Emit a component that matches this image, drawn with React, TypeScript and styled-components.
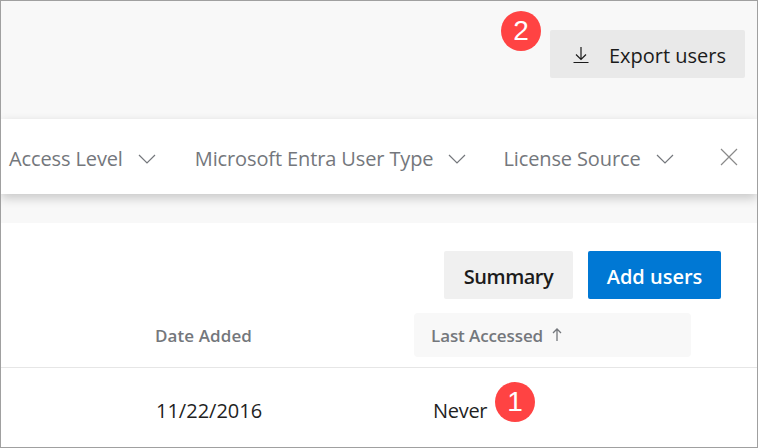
import * as React from 'react';
import styled, { createGlobalStyle } from 'styled-components';

const GlobalStyle = createGlobalStyle`
  html, body {
    margin: 0;
    padding: 0;
    background: #fff;
  }
  body {
    font-family: "Open Sans", "Noto Sans", sans-serif;
  }
`;

const Frame = styled.div`
  width: 758px;
  height: 448px;
  box-sizing: border-box;
  border: 1px solid #a0a0a0;
  position: relative;
  overflow: hidden;
  display: flex;
  flex-direction: column;
  background: #f8f8f8;
`;

const TopBar = styled.div`
  height: 118px;
  flex: none;
  display: flex;
  justify-content: flex-end;
  padding: 29px 12px 0 0;
  box-sizing: border-box;
`;

const Button = styled.div<{ $primary?: boolean; $width: number }>`
  width: ${p => p.$width}px;
  height: 48px;
  padding-top: 2px;
  display: flex;
  align-items: center;
  justify-content: center;
  box-sizing: border-box;
  border-radius: 2px;
  font-size: 20px;
  font-weight: 600;
  letter-spacing: ${p => (p.$primary ? '0' : '-0.5px')};
  color: ${p => (p.$primary ? '#fff' : '#1b1b1b')};
  background: ${p => (p.$primary ? '#0078d4' : '#f0f0f0')};
`;

const ExportButton = styled(Button)`
  background: #e9e9e9;
  gap: 19px;
  padding-left: 3px;
  font-weight: 500;
  letter-spacing: 0;
`;

const FilterBar = styled.div`
  height: 75px;
  flex: none;
  display: flex;
  align-items: center;
  padding: 4px 19px 0 8px;
  box-sizing: border-box;
  background: #fff;
  box-shadow: 0 4px 10px rgba(0, 0, 0, 0.2);
  position: relative;
`;

const Filter = styled.div<{ $gap: number }>`
  display: flex;
  align-items: center;
  gap: 15px;
  margin-right: ${p => p.$gap}px;
  font-size: 20px;
  letter-spacing: -0.12px;
  color: #74777c;
`;

const Chevron = () => (
  <svg width="18" height="10" viewBox="0 0 18 10" fill="none" stroke="#74777c" strokeWidth="1.2">
    <path d="M1 1l8 8 8-8" />
  </svg>
);

const CloseIcon = styled.svg`
  margin-left: auto;
  margin-bottom: 4px;
  width: 18px;
  height: 18px;
`;

const Spacer = styled.div`
  height: 29px;
  flex: none;
`;

const Panel = styled.div`
  flex: 1;
  background: #fff;
  display: flex;
  flex-direction: column;
`;

const Actions = styled.div`
  display: flex;
  justify-content: flex-end;
  gap: 15px;
  padding: 28px 36px 0 0;
`;

const HeaderRow = styled.div`
  display: flex;
  height: 69px;
  padding-top: 14px;
  box-sizing: border-box;
  border-bottom: 1px solid #e6e6e6;
`;

const Cell = styled.div`
  font-size: 17px;
`;

const DateHeader = styled(Cell)`
  width: 259px;
  padding: 11px 0 0 154px;
  box-sizing: content-box;
  font-weight: 600;
  letter-spacing: 0.1px;
  color: #74777c;
`;

const SortedHeader = styled(Cell)`
  width: 277px;
  height: 44px;
  box-sizing: border-box;
  padding-left: 17px;
  display: flex;
  align-items: center;
  gap: 9px;
  border-radius: 4px;
  background: #f8f8f8;
  font-weight: 600;
  letter-spacing: -0.1px;
  color: #74777c;
`;

const DataRow = styled.div`
  display: flex;
  padding-top: 29px;
  font-size: 20px;
  color: #1f1f1f;
`;

const DateCell = styled.div`
  width: 277px;
  padding-left: 155px;
`;

const NeverCell = styled.div`
  letter-spacing: -0.3px;
`;

const Badge = styled.div<{ $left: number; $top: number }>`
  position: absolute;
  left: ${p => p.$left}px;
  top: ${p => p.$top}px;
  width: 40px;
  height: 40px;
  border-radius: 50%;
  background: #ff4343;
  color: #fff;
  font-family: "Liberation Sans", Arial, sans-serif;
  font-size: 28px;
  display: flex;
  align-items: center;
  justify-content: center;
`;

export default function App() {
  return (
    <>
      <GlobalStyle />
      <Frame>
        <TopBar>
          <ExportButton $width={195}>
            <svg width="18" height="18" viewBox="0 0 18 18" fill="none" stroke="#1b1b1b" strokeWidth="1.2">
              <path d="M9 1v12M4 8.500l5 5 5-5M1.500 16.500h15" />
            </svg>
            Export users
          </ExportButton>
        </TopBar>
        <FilterBar>
          <Filter $gap={39}>
            Access Level
            <Chevron />
          </Filter>
          <Filter $gap={37}>
            Microsoft Entra User Type
            <Chevron />
          </Filter>
          <Filter $gap={0}>
            License Source
            <Chevron />
          </Filter>
          <CloseIcon viewBox="0 0 18 18" fill="none" stroke="#8a8a8a" strokeWidth="1.2">
            <path d="M1 1l16 16M17 1L1 17" />
          </CloseIcon>
        </FilterBar>
        <Spacer />
        <Panel>
          <Actions>
            <Button $width={129}>Summary</Button>
            <Button $width={133} $primary>
              Add users
            </Button>
          </Actions>
          <HeaderRow>
            <DateHeader>Date Added</DateHeader>
            <SortedHeader>
              Last Accessed
              <svg width="10" height="14" viewBox="0 0 10 14" fill="none" stroke="#74777c" strokeWidth="1.3">
                <path d="M5 13V1M1 5l4-4 4 4" />
              </svg>
            </SortedHeader>
          </HeaderRow>
          <DataRow>
            <DateCell>11/22/2016</DateCell>
            <NeverCell>Never</NeverCell>
          </DataRow>
        </Panel>
        <Badge $left={500} $top={10}>2</Badge>
        <Badge $left={494} $top={381}>1</Badge>
      </Frame>
    </>
  );
}
